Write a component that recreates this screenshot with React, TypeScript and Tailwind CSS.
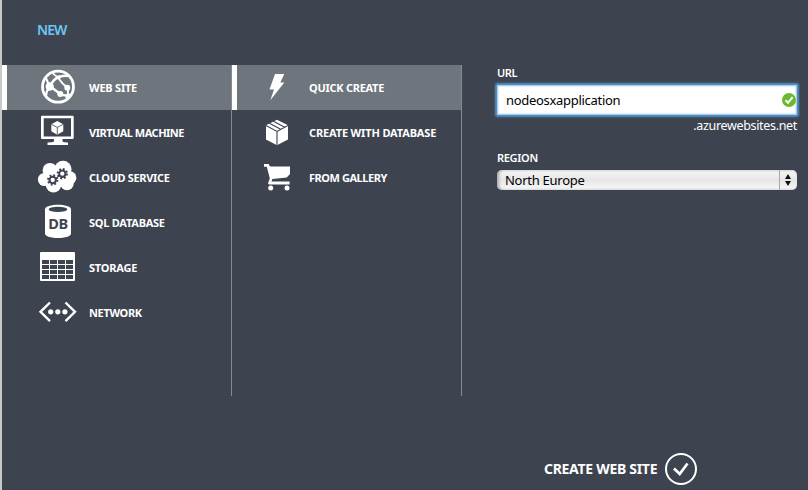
import type { ReactNode } from 'react';

const BG = '#3d444f';

function WebIcon() {
  return (
    <g fill="none" stroke="#fff" strokeWidth="1.7">
      <circle cx="22" cy="21.7" r="15.5" strokeWidth="2.8" />
      <path d="M13.7 21.7 C16 16.5 19.5 13.2 23 12 C26 11 29 10.5 32 11" strokeWidth="2.6" />
      <path d="M16.5 7.5 C18.5 10.5 21 12 23.3 12.3" />
      <path d="M9.5 12.5 C11 15 12 18 13.7 21.7 C11 25 10 28 10 31" strokeWidth="2.2" />
      <path d="M14.5 16.5 C20 17 26 18.5 31.3 22.7" strokeWidth="0" />
      <path d="M22.6 13.5 C25 17 28 20 31.3 22.7 C32.5 26 32 30 30 33" strokeWidth="2" />
      <path d="M14.7 21.7 L24.3 29 C28 30.8 31 30.8 34.5 29.8" strokeWidth="2.5" />
      <g fill="#fff" stroke="none">
        <ellipse cx="13.7" cy="21.5" rx="4.1" ry="4.3" />
        <circle cx="31.3" cy="22.7" r="3" />
        <circle cx="24.3" cy="29" r="3" />
        <circle cx="22.8" cy="12.2" r="1.9" />
      </g>
    </g>
  );
}

function MachineIcon() {
  return (
    <g fill="#fff">
      <path fillRule="evenodd" d="M6 5.7H36.7Q37.7 5.7 37.7 6.7V28Q37.7 29 36.7 29H6Q5 29 5 28V6.7Q5 5.7 6 5.7ZM7.7 8.3V26.5H35V8.3Z" />
      <path d="M18 29H26.5V31.5Q27 32.3 32 32.5V35H11.5V32.5Q17 32.3 18 31.5Z" />
      <path d="M21.3 11L27.3 14.3V21.3L21.3 24.8L15.3 21.3V14.3Z" />
      <path d="M15.3 14.3L21.3 17.4L27.3 14.3M21.3 17.4V24.8" fill="none" stroke={BG} strokeWidth=".8" />
    </g>
  );
}

function Gear({ x, y }: { x: number; y: number }) {
  return (
    <g transform={`translate(${x} ${y})`} fill="none" stroke={BG}>
      <circle r="3.2" strokeWidth="2.1" />
      <circle r="4.7" strokeWidth="2" strokeDasharray="1.8 1.891" />
    </g>
  );
}

function CloudIcon() {
  return (
    <g>
      <g fill="#fff">
        <circle cx="14" cy="15.3" r="7.4" />
        <circle cx="27" cy="14.2" r="8.5" />
        <circle cx="34" cy="22.7" r="6.4" />
        <circle cx="8.5" cy="24.5" r="6.6" />
        <circle cx="17.5" cy="30" r="7.6" />
        <circle cx="31" cy="28.5" r="6.7" />
        <rect x="10" y="14" width="23" height="18" />
      </g>
      <Gear x={16.7} y={25} />
      <Gear x={26.3} y={18.7} />
    </g>
  );
}

function DatabaseIcon() {
  return (
    <g>
      <path fill="#fff" d="M9 9.3C9 3.2 35 3.2 35 9.3V33.5C35 39.5 9 39.5 9 33.5Z" />
      <ellipse cx="22" cy="9.4" rx="9.3" ry="2.7" fill={BG} />
      <text x="22" y="29.4" textAnchor="middle" fill={BG} className="font-['Noto_Sans',sans-serif] text-[14.5px] font-bold tracking-[-0.3px]">DB</text>
    </g>
  );
}

function StorageIcon() {
  return (
    <g>
      <rect x="4" y="7" width="35" height="29" rx="1" fill="#fff" />
      {[15, 20, 25, 30].map((y) =>
        [6, 14, 22, 30].map((x) => <rect key={`${x}-${y}`} x={x} y={y} width="7" height="4" fill={BG} />),
      )}
    </g>
  );
}

function NetworkIcon() {
  return (
    <g fill="#fff">
      <path d="M14 12.5L4.5 21.8L14 31.2M29.5 12.5L39 21.8L29.5 31.2" fill="none" stroke="#fff" strokeWidth="2.4" />
      <circle cx="14.7" cy="21.8" r="2.6" />
      <circle cx="21.8" cy="21.8" r="2.6" />
      <circle cx="28.9" cy="21.8" r="2.6" />
    </g>
  );
}

function BoltIcon() {
  return <path fill="#fff" d="M15 9H24.3L20.3 17.4H24.3L10.3 35.3L14 24.6H9.5Z" />;
}

function BoxIcon() {
  return (
    <g fill="#fff">
      <path d="M17 9.8L28 15.2V29.4L17 35.2L6 29.4V15.2Z" />
      <path d="M6 15.6L17 21.4L28 15.6M17 21.4V35.5M9.3 13.2L20.7 19.2M13.4 11.2L24.8 17.2" fill="none" stroke={BG} strokeWidth="1.1" />
    </g>
  );
}

function CartIcon() {
  return (
    <g fill="#fff">
      <path d="M4 9H8.6L10 11.6H30V19L26.7 22.5L12.3 24L11.5 26.5H29.6V29.4H9L8 28.3L9.8 23.4L6.8 11.7H4Z" />
      <circle cx="10.7" cy="33" r="2.5" />
      <circle cx="27" cy="33" r="2.5" />
    </g>
  );
}

type Item = { label: string; icon: ReactNode; spacing: string };

const services: Item[] = [
  { label: 'WEB SITE', icon: <WebIcon />, spacing: 'tracking-[-0.22px]' },
  { label: 'VIRTUAL MACHINE', icon: <MachineIcon />, spacing: 'tracking-[-0.5px]' },
  { label: 'CLOUD SERVICE', icon: <CloudIcon />, spacing: 'tracking-[-0.35px]' },
  { label: 'SQL DATABASE', icon: <DatabaseIcon />, spacing: 'tracking-[-0.25px]' },
  { label: 'STORAGE', icon: <StorageIcon />, spacing: 'tracking-[-0.22px]' },
  { label: 'NETWORK', icon: <NetworkIcon />, spacing: 'tracking-[-0.35px]' },
];

const methods: Item[] = [
  { label: 'QUICK CREATE', icon: <BoltIcon />, spacing: 'tracking-[-0.27px]' },
  { label: 'CREATE WITH DATABASE', icon: <BoxIcon />, spacing: 'tracking-[-0.15px]' },
  { label: 'FROM GALLERY', icon: <CartIcon />, spacing: 'tracking-[-0.45px]' },
];

function Menu({ items, offset, gap, width }: { items: Item[]; offset: string; gap: string; width: string }) {
  return (
    <ul className={`h-[331px] shrink-0 border-r border-[#868b93] ${width}`}>
      {items.map((item, i) => (
        <li
          key={item.label}
          className={`flex h-[45px] items-center border-l-[5px] ${offset} ${i === 0 ? 'border-white bg-[#6e757c]' : 'border-transparent'}`}
        >
          <svg className="h-[45px] w-[44px] shrink-0" viewBox="0 0 44 45">{item.icon}</svg>
          <span className={`whitespace-nowrap font-bold leading-[16px] ${gap} ${item.spacing}`}>{item.label}</span>
        </li>
      ))}
    </ul>
  );
}

export default function App() {
  return (
    <main className="h-[490px] w-[808px] overflow-hidden border-l-2 border-[#c9c9c9] bg-[#3d444f] font-['Noto_Sans',sans-serif] text-[11px] text-white">
      <h1 className="h-[65px] pl-[35px] pt-[20px] text-[14px] font-semibold leading-[20px] tracking-[-0.9px] text-[#6dc6f5]">NEW</h1>
      <div className="flex h-[331px]">
        <Menu items={services} offset="pl-[29px]" gap="ml-[9px]" width="w-[230px]" />
        <Menu items={methods} offset="pl-[23px]" gap="ml-[5px]" width="w-[230px]" />
        <form className="ml-[35px] w-[300px]">
          <label className="block h-[20px] text-[11px] font-semibold leading-[16px] tracking-[-0.4px]">URL</label>
          <div className="flex h-[30px] items-center justify-between rounded-[1px] bg-white pl-[9px] pr-[1px] text-[13px] text-black shadow-[inset_0_0_2px_1px_#8fc0e6,0_0_2px_2px_#5292c8]">
            <span className="pt-[2px] tracking-[-0.3px]">nodeosxapplication</span>
            <svg className="size-[14px]" viewBox="0 0 14 14">
              <circle cx="7" cy="7" r="7" fill="#6cb92d" />
              <path d="M3.5 7.3L6 9.8L10.6 4.2" fill="none" stroke="#fff" strokeWidth="2" />
            </svg>
          </div>
          <div className="h-[35px] pt-[2px] text-right text-[12.5px] leading-[18px] tracking-[-0.33px]">.azurewebsites.net</div>
          <label className="block h-[20px] text-[11px] font-semibold leading-[16px] tracking-[-0.3px]">REGION</label>
          <div className="flex h-[20px] items-center justify-between rounded-[5px] bg-linear-to-b from-[#f7f7f7] via-[#e6e6e6] to-[#fafafa] pl-[8px] text-[13px] text-black shadow-[inset_2px_0_3px_#aaa]">
            <span className="pt-[2px] tracking-[-0.27px]">North Europe</span>
            <span className="flex h-[20px] w-[18px] items-center justify-center border-l border-[#aaa] pr-[2px]">
              <svg className="h-[12px] w-[6px]" viewBox="0 0 6 12"><path d="M3 0L6 5H0ZM0 7H6L3 12Z" fill="#111" /></svg>
            </span>
          </div>
        </form>
      </div>
      <footer className="mt-[57px] flex h-[32px] items-center pl-[542px]">
        <span className="w-[121px] whitespace-nowrap text-[14px] font-bold leading-[20px] tracking-[-0.3px]">CREATE WEB SITE</span>
        <svg className="size-[32px]" viewBox="0 0 32 32" fill="none" stroke="#fff">
          <circle cx="16" cy="16" r="15" strokeWidth="2" />
          <path d="M9 15.5L14.7 21L22.5 10.5" strokeWidth="2.7" />
        </svg>
      </footer>
    </main>
  );
}
